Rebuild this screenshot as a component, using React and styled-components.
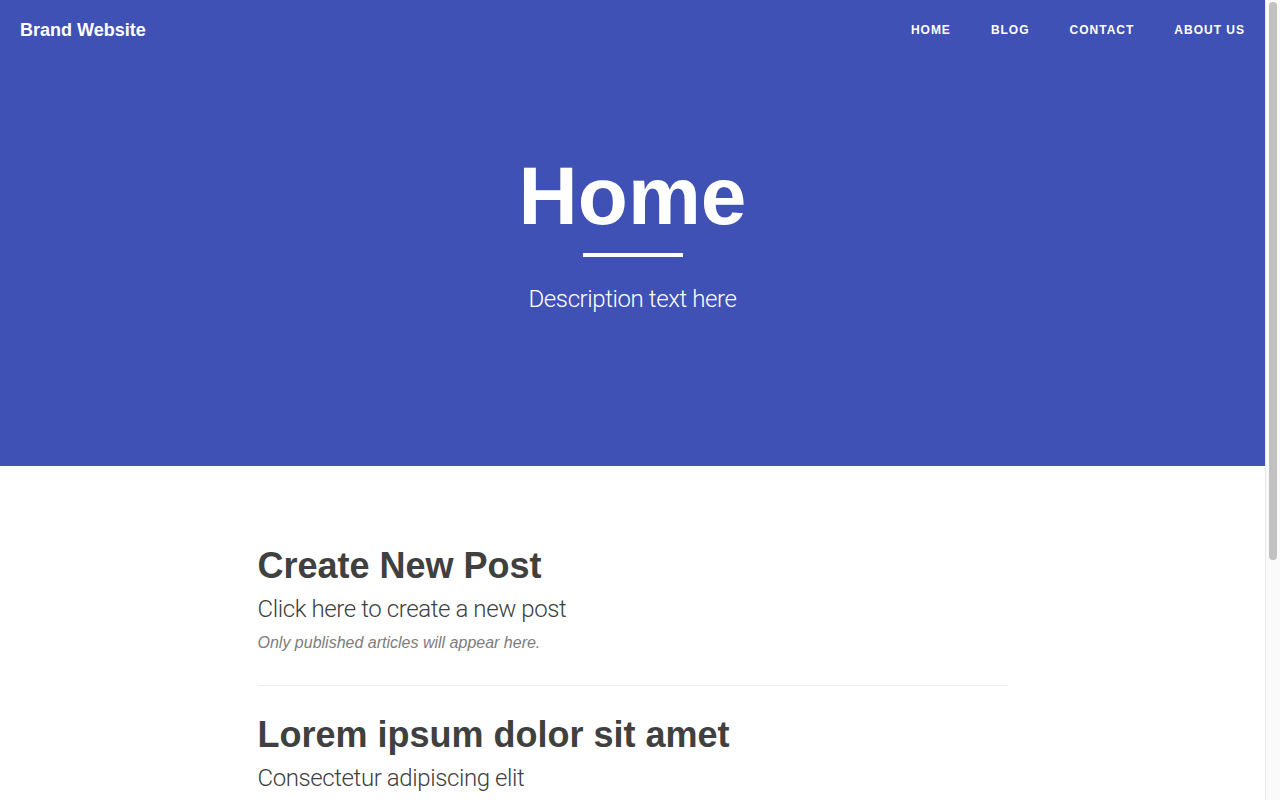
import React from "react"
import styled, { createGlobalStyle } from "styled-components"

const GlobalStyle = createGlobalStyle`
  html, body {
    margin: 0;
    padding: 0;
  }
  body {
    font-family: "Liberation Sans", Arial, sans-serif;
    color: #404040;
    background: #fff;
  }
  * {
    box-sizing: border-box;
  }
`

const posts = [
  {
    title: "Create New Post",
    subtitle: "Click here to create a new post",
    meta: "Only published articles will appear here.",
  },
  {
    title: "Lorem ipsum dolor sit amet",
    subtitle: "Consectetur adipiscing elit",
    meta: "Posted by Admin on January 1, 2018",
  },
  {
    title: "Sed do eiusmod tempor",
    subtitle: "Incididunt ut labore et dolore magna aliqua",
    meta: "Posted by Admin on January 1, 2018",
  },
]

const App = () => {
  return (
    <Page>
      <GlobalStyle />
      <Viewport>
        <Header>
          <Nav>
            <Brand href="#">Brand Website</Brand>
            <NavList>
              <NavItem><NavLink href="#">Home</NavLink></NavItem>
              <NavItem><NavLink href="#">Blog</NavLink></NavItem>
              <NavItem><NavLink href="#">Contact</NavLink></NavItem>
              <NavItem><NavLink href="#">About us</NavLink></NavItem>
            </NavList>
          </Nav>
          <Hero>
            <HeroTitle>Home</HeroTitle>
            <Divider />
            <HeroText>Description text here</HeroText>
          </Hero>
        </Header>
        <Main>
          {posts.map((post, i) => (
            <Post key={i} $last={i === posts.length - 1}>
              <PostTitle>{post.title}</PostTitle>
              <PostSubtitle>{post.subtitle}</PostSubtitle>
              <PostMeta>{post.meta}</PostMeta>
            </Post>
          ))}
        </Main>
      </Viewport>
      <ScrollTrack>
        <ScrollThumb />
      </ScrollTrack>
    </Page>
  )
}

export default App

const Page = styled.div`
  display: flex;
  height: 100vh;
  overflow: hidden;
`

const Viewport = styled.div`
  flex: 1;
  min-width: 0;
  overflow: hidden;
`

const ScrollTrack = styled.div`
  width: 15px;
  flex-shrink: 0;
  background: #fafafa;
  border-left: 1px solid #e8e8e8;
  padding: 2px 3px 0 3px;
`

const ScrollThumb = styled.div`
  height: 558px;
  border-radius: 4px;
  background: #c1c1c1;
`

const Header = styled.header`
  background-color: #3f51b5;
  height: 466px;
  display: flex;
  flex-direction: column;
`

const Nav = styled.nav`
  height: 60px;
  display: flex;
  align-items: center;
  justify-content: space-between;
  padding-left: 20px;
`

const Brand = styled.a`
  color: #fff;
  font-size: 18px;
  font-weight: 700;
  text-decoration: none;
`

const NavList = styled.ul`
  display: flex;
  list-style: none;
  margin: 0;
  padding: 0;
`

const NavItem = styled.li`
  display: block;
`

const NavLink = styled.a`
  display: block;
  padding: 0 20px;
  color: #fff;
  font-size: 12px;
  font-weight: 700;
  letter-spacing: 1px;
  text-transform: uppercase;
  text-decoration: none;
  line-height: 20px;
`

const Hero = styled.div`
  display: flex;
  flex-direction: column;
  align-items: center;
  padding-top: 95px;
  color: #fff;
`

const HeroTitle = styled.h1`
  margin: 0;
  font-size: 82px;
  line-height: 82px;
  font-weight: 700;
`

const Divider = styled.hr`
  width: 100px;
  height: 4px;
  border: none;
  background: #fff;
  margin: 16px 0 0 0;
`

const HeroText = styled.p`
  margin: 30px 0 0 0;
  font-family: "Roboto", "Liberation Sans", sans-serif;
  font-weight: 300;
  font-size: 24px;
  line-height: 24px;
  letter-spacing: -0.4px;
`

const Main = styled.main`
  width: 750px;
  margin: 0 auto;
  padding: 78px 0 140px;
`

const Post = styled.article`
  padding-bottom: 30px;
  margin-bottom: 27px;
  border-bottom: ${(p) => (p.$last ? "none" : "1px solid #eeeeee")};
`

const PostTitle = styled.h2`
  margin: 0;
  font-size: 36px;
  line-height: 43px;
  font-weight: 700;
  color: #404040;
`

const PostSubtitle = styled.h3`
  margin: 7px 0 0 0;
  font-family: "Roboto", "Liberation Sans", sans-serif;
  font-weight: 300;
  font-size: 24px;
  line-height: 30px;
  letter-spacing: -0.4px;
  color: #404040;
`

const PostMeta = styled.p`
  margin: 7px 0 0 0;
  font-size: 16px;
  line-height: 24px;
  font-style: italic;
  color: #7d7d7d;
`
